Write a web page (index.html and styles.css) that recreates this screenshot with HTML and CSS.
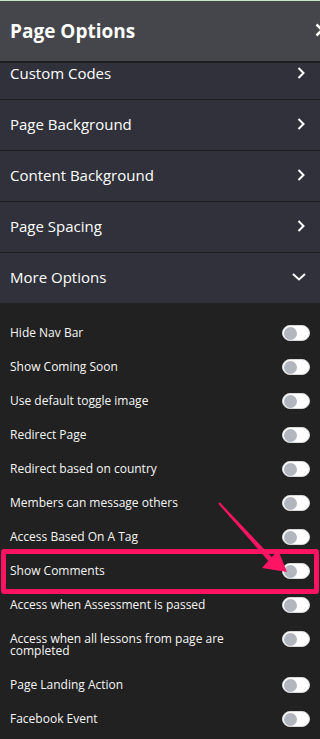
FILE: index.html
```html
<!DOCTYPE html>
<html lang="en">
<head>
<meta charset="utf-8">
<title>Page Options</title>
<link rel="stylesheet" href="styles.css">
</head>
<body>
<div class="app">
  <div class="topline"></div>
  <header class="head">
    <h1 class="title">Page Options</h1>
    <svg class="close" width="14" height="14" viewBox="0 0 14 14"><path d="M1.5 1.5 L12.5 12.5 M12.5 1.5 L1.5 12.5" stroke="#fff" stroke-width="2.6" fill="none"/></svg>
  </header>
  <div class="menu">
    <div class="menu-inner">
      <div class="mrow"><span>Custom Codes</span><svg class="chev" width="8" height="12" viewBox="0 0 8 12"><path d="M1.5 1 L6.5 6 L1.5 11" stroke="#fff" stroke-width="2" fill="none"/></svg></div>
      <div class="mrow"><span>Page Background</span><svg class="chev" width="8" height="12" viewBox="0 0 8 12"><path d="M1.5 1 L6.5 6 L1.5 11" stroke="#fff" stroke-width="2" fill="none"/></svg></div>
      <div class="mrow"><span>Content Background</span><svg class="chev" width="8" height="12" viewBox="0 0 8 12"><path d="M1.5 1 L6.5 6 L1.5 11" stroke="#fff" stroke-width="2" fill="none"/></svg></div>
      <div class="mrow"><span>Page Spacing</span><svg class="chev" width="8" height="12" viewBox="0 0 8 12"><path d="M1.5 1 L6.5 6 L1.5 11" stroke="#fff" stroke-width="2" fill="none"/></svg></div>
      <div class="mrow last"><span>More Options</span><svg class="chev-down" width="14" height="8" viewBox="0 0 14 8"><path d="M1 1 L7 6.5 L13 1" stroke="#fff" stroke-width="2" fill="none"/></svg></div>
    </div>
  </div>
  <div class="opts">
    <div class="orow"><span class="lbl">Hide Nav Bar</span><span class="tog"><span class="knob"></span></span></div>
    <div class="orow"><span class="lbl">Show Coming Soon</span><span class="tog"><span class="knob"></span></span></div>
    <div class="orow"><span class="lbl">Use default toggle image</span><span class="tog"><span class="knob"></span></span></div>
    <div class="orow"><span class="lbl">Redirect Page</span><span class="tog"><span class="knob"></span></span></div>
    <div class="orow"><span class="lbl">Redirect based on country</span><span class="tog"><span class="knob"></span></span></div>
    <div class="orow"><span class="lbl">Members can message others</span><span class="tog"><span class="knob"></span></span></div>
    <div class="orow"><span class="lbl">Access Based On A Tag</span><span class="tog"><span class="knob"></span></span></div>
    <div class="orow marked"><span class="lbl">Show Comments</span><span class="tog"><span class="knob"></span></span></div>
    <div class="orow"><span class="lbl">Access when Assessment is passed</span><span class="tog"><span class="knob"></span></span></div>
    <div class="orow"><span class="lbl">Access when all lessons from page are completed</span><span class="tog"><span class="knob"></span></span></div>
    <div class="orow"><span class="lbl">Page Landing Action</span><span class="tog"><span class="knob"></span></span></div>
    <div class="orow"><span class="lbl">Facebook Event</span><span class="tog"><span class="knob"></span></span></div>
  </div>
  <svg class="arrow" width="320" height="739" viewBox="0 0 320 739"><polygon points="219.7,502.3 271.8,557.3 278,550 287,572 262,568 268.2,560.7 218.3,503.7" fill="#ff1463"/></svg>
</div>
</body>
</html>
```
FILE: styles.css
```css
* { box-sizing: border-box; }
html, body { margin: 0; padding: 0; background: #212121; }
body { font-family: "Open Sans", "Noto Sans", sans-serif; color: #fff; }
.app { position: relative; width: 320px; height: 739px; overflow: hidden; background: #212121; }
.topline { height: 1px; background: #c6e7bf; }
.head {
  height: 62px;
  background: #45464b;
  border-bottom: 2px solid #1e1e1f;
  display: flex;
  align-items: center;
  justify-content: space-between;
  padding: 0 10px 0 10px;
  overflow: hidden;
}
.title { margin: 0; font-size: 19px; font-weight: 700; line-height: 1; letter-spacing: 0; }
.close { flex-shrink: 0; margin-right: -19px; margin-top: -3px; }
.menu { height: 240px; overflow: hidden; background: #30313a; }
.menu-inner { margin-top: -14px; }
.mrow {
  height: 51px;
  border-bottom: 1px solid #1e1e1f;
  display: flex;
  align-items: center;
  justify-content: space-between;
  padding: 0 15px 2px 10px;
  font-size: 15px;
}
.mrow.last { border-bottom: none; height: 50px; }
.chev { flex-shrink: 0; }
.chev-down { flex-shrink: 0; margin-right: -1px; }
.opts { padding-top: 13px; }
.orow {
  position: relative;
  display: flex;
  align-items: flex-start;
  justify-content: space-between;
  gap: 24px;
  padding: 11px 10px 11px 10px;
  font-size: 12px;
  line-height: 12px;
}
.lbl { color: #f7f7f7; }
.tog {
  flex-shrink: 0;
  width: 28px;
  height: 16px;
  margin: -2px 0;
  border-radius: 8px;
  background: #fff;
  border: 1px solid #d8d8d8;
  display: flex;
  align-items: center;
  padding-left: 1px;
}
.knob { width: 13px; height: 13px; border-radius: 50%; background: #b2b7bf; }
.marked::after {
  content: "";
  position: absolute;
  top: -5px;
  bottom: -6px;
  left: 1px;
  right: 1px;
  border: 5px solid #ff1463;
  border-radius: 3px;
  pointer-events: none;
}
.arrow { position: absolute; top: 0; left: 0; pointer-events: none; }
```
